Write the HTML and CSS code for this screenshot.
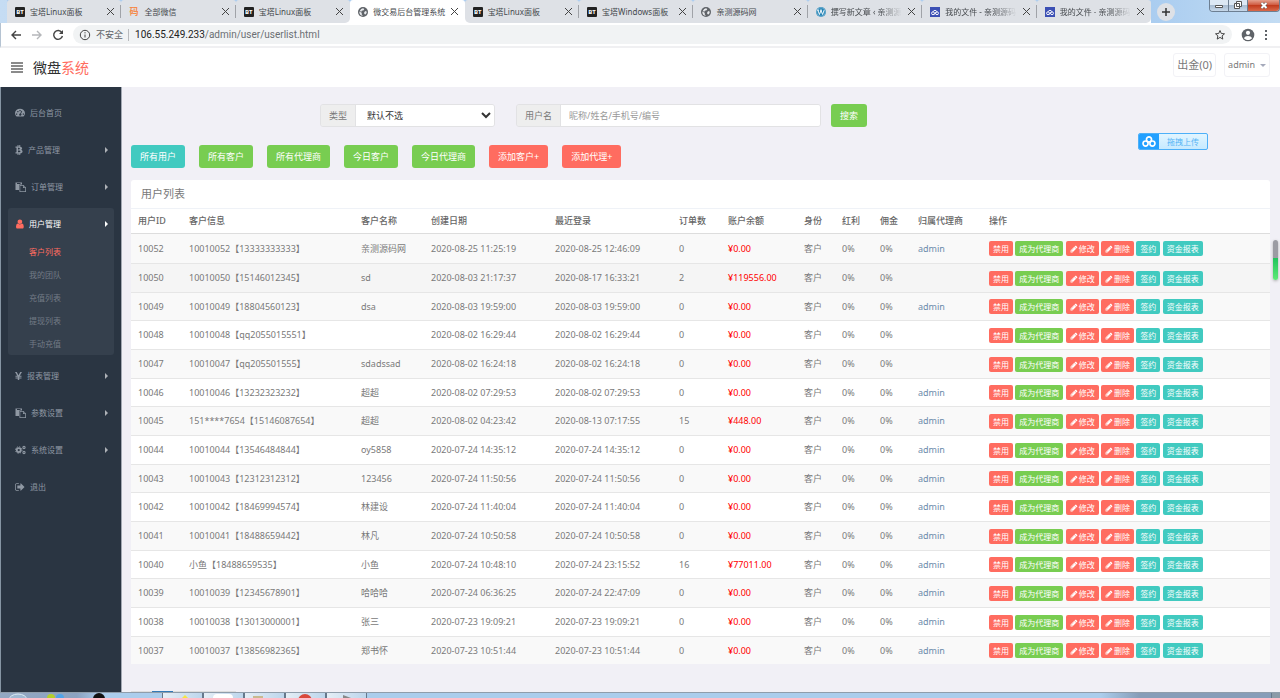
FILE: index.html
```html
<!DOCTYPE html>
<html lang="zh-CN">
<head>
	<meta charset="utf-8">
	<title>微交易后台管理系统</title>
	<meta name="viewport" content="width=device-width, initial-scale=1">
	<link rel="stylesheet" href="styles.css">
</head>
<body>

	<!-- icons -->
	<svg class="sprite" aria-hidden="true">
		<symbol id="i-globe" viewBox="0 0 16 16"><circle cx="8" cy="8" r="8" fill="#5f6368"/><path d="M2 7l4 2v3l2 2c-4 0-6-3-6-7zM5 3l3-1 2 1-1 2-3 1-1 2-2-2zM10 8l3-2 1 3-2 3-2-1z" fill="#e8eaed"/></symbol>
		<symbol id="i-wp" viewBox="0 0 16 16"><circle cx="8" cy="8" r="8" fill="#2283b5"/><circle cx="8" cy="8" r="6.8" fill="none" stroke="#dcebf4" stroke-width=".7"/><path d="M3 5l2.500 7L8 5.500l2.500 6.500L13 5M2 5h3M6.500 5h3" fill="none" stroke="#fff" stroke-width="1.500"/></symbol>
		<symbol id="i-disk" viewBox="0 0 16 16"><path d="M0 0h16v16H0z" fill="#3c50b4"/><g fill="none" stroke="#fff" stroke-width="1.500"><circle cx="4.800" cy="10" r="2.300"/><circle cx="11.200" cy="10" r="2.300"/><path d="M5 7.500a3.200 3.200 0 0 1 6 0M7 12l3-4"/></g></symbol>
		<symbol id="i-user" viewBox="128 64 1408 1664"><path d="M1536 1399q0 109-62.5 187t-150.5 78h-854q-88 0-150.5-78t-62.5-187q0-85 8.5-160.5t31.5-152 58.5-131 94-89 134.5-34.5q131 128 313 128t313-128q76 0 134.5 34.5t94 89 58.5 131 31.5 152 8.5 160.5zm-256-887q0 159-112.5 271.5t-271.5 112.5-271.5-112.5-112.5-271.5 112.5-271.5 271.5-112.500 271.500 112.500 112.500 271.500z"/></symbol>
		<symbol id="i-pencil" viewBox="0 0 1792 1792"><path d="M491 1536l91-91-235-235-91 91v107h128v128h107zm523-928q0-22-22-22-10 0-17 7l-542 542q-7 7-7 17 0 22 22 22 10 0 17-7l542-542q7-7 7-17zm-54-192l416 416-832 832h-416v-416zm683 96q0 53-37 90l-166 166-416-416 166-165q36-38 90-38 53 0 91 38l235 234q37 39 37 91z"/></symbol>
		<symbol id="i-out" viewBox="64 64 1664 1664"><path d="M704 1440q0 4 1 20t.5 26.500-3 23.500-10 19.500-20.500 6.500h-320q-119 0-203.500-84.500t-84.500-203.500v-704q0-119 84.500-203.500t203.500-84.500h320q13 0 22.500 9.500t9.500 22.500q0 4 1 20t.5 26.500-3 23.500-10 19.500-20.500 6.500h-320q-66 0-113 47t-47 113v704q0 66 47 113t113 47h312l11.500 1 11.500 3 8 5.500 7 9 2 13.500zm928-544q0 26-19 45l-544 544q-19 19-45 19t-45-19-19-45v-288h-448q-26 0-45-19t-19-45v-384q0-26 19-45t45-19h448v-288q0-26 19-45t45-19 45 19l544 544q19 19 19 45z"/></symbol>
		<symbol id="i-paste" viewBox="0 0 22 20"><path fill-rule="evenodd" d="M1 1h13v4h-4a2 2 0 0 0-2 2v9H1zM4 2v2h7V2z"/><path fill-rule="evenodd" d="M9 6h8l5 5v9H9zM10.500 7.500v11h10V12H16V7.500zM17.500 8v2.500H20z"/></symbol>
		<symbol id="i-cogs" viewBox="0 0 22 20"><circle cx="7.500" cy="10" r="4" fill="none" stroke="currentColor" stroke-width="3.500"/><circle cx="7.500" cy="10" r="6.500" fill="none" stroke="currentColor" stroke-width="2" stroke-dasharray="2.600 2.500"/><circle cx="18" cy="5" r="2.200" fill="none" stroke="currentColor" stroke-width="2.200"/><circle cx="18" cy="15" r="2.200" fill="none" stroke="currentColor" stroke-width="2.200"/></symbol>
		<symbol id="i-dash" viewBox="0 0 20 20"><path fill-rule="evenodd" d="M3 17a10 9 0 1 1 14 0zM2 11h2.500v2.500H2zM4.500 6H7v2.500H4.500zM8.800 4h2.500v2.500H8.800zM15.500 11H18v2.500h-2.500zM13 5.500L10.500 11a2.200 2.200 0 1 0 1.500.5l2.500-5z"/></symbol>
		<symbol id="i-btc" viewBox="0 0 16 20"><path fill-rule="evenodd" d="M1 3h4V0h2v3h1.500V0h2v3.300c5 1 4.500 5 2 6.200 4 1.500 3.500 7-2 7.500v3h-2v-3H7v3H5v-3H1v-2.500h2v-9H1zM6 5.500v3.300c5 .3 5-3.300 0-3.300zM6 11v3.500c6.500.3 6.500-3.800 0-3.500z"/></symbol>
		<symbol id="i-yen" viewBox="0 0 14 20"><path d="M0 2h3.500L7 8.500 10.500 2H14l-4.500 7.500H13v2H8.500v1.500H13v2H8.500V18h-3v-3H1v-2h4.500v-1.500H1v-2h3.500z"/></symbol>
		<symbol id="i-cloud" viewBox="0 0 20 16"><g fill="none" stroke="#fff" stroke-width="2.400"><circle cx="10" cy="5" r="3.700"/><circle cx="5" cy="11" r="3.700"/><circle cx="15" cy="11" r="3.700"/></g></symbol>
	</svg>

	<div class="window">
		<!-- browser tabs -->
		<div class="tab-strip">
			<div class="tab-list">
				<div class="tab"><span class="bt">BT</span><span class="tab-title">宝塔Linux面板</span><button class="tab-close" aria-label="关闭"></button></div>
				<div class="tab"><span class="ma">码</span><span class="tab-title">全部微信</span><button class="tab-close" aria-label="关闭"></button></div>
				<div class="tab before"><span class="bt">BT</span><span class="tab-title">宝塔Linux面板</span><button class="tab-close" aria-label="关闭"></button></div>
				<div class="tab active"><svg class="fav"><use href="#i-globe"/></svg><span class="tab-title">微交易后台管理系统</span><button class="tab-close" aria-label="关闭"></button></div>
				<div class="tab after"><span class="bt">BT</span><span class="tab-title">宝塔Linux面板</span><button class="tab-close" aria-label="关闭"></button></div>
				<div class="tab"><span class="bt">BT</span><span class="tab-title">宝塔Windows面板</span><button class="tab-close" aria-label="关闭"></button></div>
				<div class="tab"><svg class="fav"><use href="#i-globe"/></svg><span class="tab-title">亲测源码网</span><button class="tab-close" aria-label="关闭"></button></div>
				<div class="tab"><svg class="fav"><use href="#i-wp"/></svg><span class="tab-title fade">撰写新文章 ‹ 亲测源</span><button class="tab-close" aria-label="关闭"></button></div>
				<div class="tab"><svg class="fav"><use href="#i-disk"/></svg><span class="tab-title fade">我的文件 - 亲测源码</span><button class="tab-close" aria-label="关闭"></button></div>
				<div class="tab before"><svg class="fav"><use href="#i-disk"/></svg><span class="tab-title fade">我的文件 - 亲测源码</span><button class="tab-close" aria-label="关闭"></button></div>
			</div>
			<button class="new-tab" aria-label="新标签页"><svg viewBox="0 0 10 10"><path d="M5 1v8M1 5h8"/></svg></button>
			<div class="win-buttons">
				<button class="win-btn" aria-label="最小化"><svg viewBox="0 0 18 11"><path d="M5.500 5.500h7v2h-7z"/></svg></button>
				<button class="win-btn" aria-label="还原"><svg viewBox="0 0 18 11"><path d="M7.500 1.500h5v5h-5zM5.500 3.500h5v5h-5z"/></svg></button>
				<button class="win-btn win-close" aria-label="关闭窗口"><svg viewBox="0 0 18 11"><path d="M6.500 3l5 5M11.500 3l-5 5" stroke="#555" stroke-width="3"/><path d="M6.500 3l5 5M11.500 3l-5 5" stroke="#fff" stroke-width="2"/></svg></button>
			</div>
		</div>

		<!-- address bar -->
		<div class="toolbar">
			<svg class="nav-icon" viewBox="0 0 12 12"><path d="M11 6H2M6 2L2 6l4 4"/></svg>
			<svg class="nav-icon dim" viewBox="0 0 12 12"><path d="M1 6h9M6 2l4 4-4 4"/></svg>
			<svg class="nav-icon" viewBox="0 0 12 12"><path d="M9.800 3.500A4.400 4.400 0 1 0 10.400 7"/><path d="M11 1v4H7z" fill="#444" stroke="none"/></svg>
			<div class="address">
				<svg class="info" viewBox="0 0 12 12"><circle cx="6" cy="6" r="4.700"/><path d="M6 5.500v3M6 3.200v1.200"/></svg>
				<span class="unsafe">不安全</span>
				<span class="url"><b>106.55.249.233</b>/admin/user/userlist.html</span>
				<svg class="star" viewBox="0 0 12 12"><path d="M6 1.500l1.300 3 3.200.3-2.400 2.100.7 3.200L6 8.400l-2.800 1.700.7-3.200-2.400-2.100 3.200-.3z"/></svg>
			</div>
			<svg class="person" viewBox="0 0 14 14"><circle cx="7" cy="7" r="6.300" fill="#5f6368"/><circle cx="7" cy="4.800" r="2.100" fill="#fff"/><path d="M3 10.200c1-2.800 7-2.800 8 0-2 2.400-6 2.400-8 0z" fill="#fff"/></svg>
			<svg class="dots" viewBox="0 0 4 14"><path d="M1 2h2v2H1zM1 6h2v2H1zM1 10h2v2H1z" fill="#5f6368"/></svg>
		</div>

		<!-- site header -->
		<header class="header">
			<button class="bars" aria-label="菜单"><svg viewBox="0 0 12 11"><path d="M0 1h12M0 4h12M0 7h12M0 10h12"/></svg></button>
			<a class="logo" href="#">微盘<span>系统</span></a>
			<a class="top-link cash" href="#">出金(0)</a>
			<a class="top-link" href="#">admin<i class="caret"></i></a>
		</header>

		<div class="container">
			<aside class="sidebar">
				<ul class="menu">
					<li><a href="#"><svg width="10" height="10"><use href="#i-dash"/></svg>后台首页</a></li>
					<li><a class="has-sub" href="#"><svg width="8" height="10"><use href="#i-btc"/></svg>产品管理</a></li>
					<li><a class="has-sub" href="#"><svg width="11" height="10"><use href="#i-paste"/></svg>订单管理</a></li>
					<li class="open">
						<a class="has-sub" href="#"><svg width="9" height="10"><use href="#i-user"/></svg>用户管理</a>
						<ul class="sub">
							<li><a class="current" href="#">客户列表</a></li>
							<li><a href="#">我的团队</a></li>
							<li><a href="#">充值列表</a></li>
							<li><a href="#">提现列表</a></li>
							<li><a href="#">手动充值</a></li>
						</ul>
					</li>
					<li><a class="has-sub" href="#"><svg width="7" height="10"><use href="#i-yen"/></svg>报表管理</a></li>
					<li><a class="has-sub" href="#"><svg width="11" height="10"><use href="#i-paste"/></svg>参数设置</a></li>
					<li><a class="has-sub" href="#"><svg width="11" height="10"><use href="#i-cogs"/></svg>系统设置</a></li>
					<li><a href="#"><svg width="10" height="10"><use href="#i-out"/></svg>退出</a></li>
				</ul>
			</aside>

			<main class="main">
				<form class="search">
					<div class="group group-type">
						<label for="otype">类型</label>
						<select id="otype"><option>默认不选</option></select>
					</div>
					<div class="group group-name">
						<label for="username">用户名</label>
						<input id="username" type="text" placeholder="昵称/姓名/手机号/编号">
					</div>
					<button class="btn green" type="button">搜索</button>
				</form>

				<div class="filters">
					<button class="btn teal">所有用户</button>
					<button class="btn green">所有客户</button>
					<button class="btn green">所有代理商</button>
					<button class="btn green">今日客户</button>
					<button class="btn green">今日代理商</button>
					<button class="btn red">添加客户+</button>
					<button class="btn red">添加代理+</button>
				</div>

				<section class="panel">
					<h1>用户列表</h1>
					<table>
						<colgroup>
							<col class="c-id"><col class="c-info"><col class="c-name"><col class="c-date"><col class="c-date"><col class="c-num">
							<col class="c-money"><col class="c-small"><col class="c-small"><col class="c-small"><col class="c-agent"><col>
						</colgroup>
						<thead>
							<tr><th>用户ID</th><th>客户信息</th><th>客户名称</th><th>创建日期</th><th>最近登录</th><th>订单数</th><th>账户余额</th><th>身份</th><th>红利</th><th>佣金</th><th>归属代理商</th><th>操作</th></tr>
						</thead>
						<tbody id="users"></tbody>
					</table>
				</section>

				<div class="pages"><span></span><span class="on"></span><span></span><span></span><span></span></div>

				<button class="upload"><span class="upload-icon"><svg><use href="#i-cloud"/></svg></span><span class="upload-text">拖拽上传</span></button>
				<div class="meter"></div>
			</main>
		</div>

		<!-- taskbar -->
		<footer class="taskbar">
			<svg width="162" height="5"><ellipse cx="18" cy="7" rx="9" ry="6" fill="#9fb9d2" stroke="#dcecf5"/><circle cx="51" cy="5" r="4" fill="#b4cf2a"/><circle cx="60" cy="5" r="4" fill="#4fa3e8"/><circle cx="99" cy="6" r="6" fill="#111"/></svg>
			<div class="task"><svg width="39" height="5"><path d="M19 5l3-3 3 3z" fill="#f5e642"/></svg></div>
			<div class="task"><svg width="39" height="5"><rect x="9" y="1" width="20" height="8" rx="4" fill="#fff"/></svg></div>
			<div class="task"><svg width="39" height="5"><path d="M8 3h10v2H8z" fill="#c9b98f"/></svg></div>
			<div class="task"><svg width="39" height="5"><circle cx="19" cy="8" r="7" fill="#d9483b"/></svg></div>
			<div class="task"><svg width="39" height="5"><path d="M16 2l8 3h-8z" fill="#888"/></svg></div>
			<div class="show-desktop"></div>
		</footer>
	</div>

	<script src="script.js"></script>
</body>
</html>
```
FILE: styles.css
```css
* {
	box-sizing: border-box;
}
body {
	margin: 0;
	font-family: "Noto Sans", "Noto Sans CJK SC", sans-serif;
	font-size: 9px;
	line-height: 14px;
	color: #797979;
	background: #f1f0f6;
}
a {
	color: inherit;
	text-decoration: none;
}
ul {
	list-style: none;
	margin: 0;
	padding: 0;
}
button, input, select {
	font: inherit;
	border: 0;
	padding: 0;
}
.sprite {
	display: none;
}
.window {
	display: flex;
	flex-direction: column;
	height: 100vh;
	overflow: hidden;
}

/* browser tabs */
.tab-strip {
	display: flex;
	align-items: center;
	height: 23px;
	flex: none;
	padding-left: 7px;
	background: linear-gradient(90deg, #c5dcf3, #aacbea 30%, #aacdf0 90%, #c3dcf3);
}
.tab-list {
	display: flex;
	flex: 1;
	height: 23px;
	background: linear-gradient(#aacdf0 4px, #fff 4px);
}
.tab {
	position: relative;
	display: flex;
	flex: 1;
	min-width: 0;
	align-items: center;
	gap: 5px;
	padding: 0 6px 0 8px;
	border-radius: 3px 3px 0 0;
	background: #dee1e6;
	color: #45494d;
	font-size: 8px;
}
.tab::after {
	content: "";
	position: absolute;
	right: 0;
	top: 5px;
	height: 13px;
	border-right: 1px solid #a0a3a8;
}
.tab.active {
	background: #fff;
}
.tab.before {
	border-bottom-right-radius: 5px;
}
.tab.after {
	border-bottom-left-radius: 5px;
}
.tab.active::after, .tab.before::after {
	display: none;
}
.fav, .bt, .ma {
	flex: none;
	width: 10px;
	height: 10px;
}
.bt {
	background: #222;
	color: #fff;
	font-size: 6px;
	font-weight: bold;
	line-height: 10px;
	text-align: center;
	border-radius: 1px;
}
.ma {
	color: #f58a4b;
	font-size: 9px;
	font-weight: bold;
	line-height: 10px;
}
.tab-title {
	flex: 1;
	white-space: nowrap;
}
.fade {
	mask-image: linear-gradient(90deg, #000 70%, transparent);
}
.tab-close {
	flex: none;
	width: 9px;
	height: 9px;
	background:
		linear-gradient(45deg, transparent 45%, #444 45%, #444 57%, transparent 57%) center / 7px 7px no-repeat,
		linear-gradient(135deg, transparent 45%, #444 45%, #444 57%, transparent 57%) center / 7px 7px no-repeat;
}
.new-tab {
	display: flex;
	align-items: center;
	justify-content: center;
	width: 18px;
	height: 18px;
	margin: 0 34px 0 6px;
	border-radius: 50%;
	background: #dee1e6;
}
.new-tab svg {
	width: 10px;
	fill: none;
	stroke: #333;
	stroke-width: 1.5;
}
.win-buttons {
	display: flex;
	align-self: flex-start;
	height: 12px;
	border: 1px solid #6d7f92;
	border-top: 0;
	border-radius: 0 0 4px 4px;
	overflow: hidden;
}
.win-btn {
	display: flex;
	justify-content: center;
	width: 19px;
	border-right: 1px solid #6d7f92;
	background: linear-gradient(#dce8f4 50%, #a9bdd2 50%, #c6d8ea);
}
.win-btn svg {
	width: 18px;
	height: 11px;
	fill: #fff;
	stroke: #555;
}
.win-close {
	width: 31px;
	border-right: 0;
	background: linear-gradient(#e5a28f, #cf5a40 45%, #c23c1e 50%, #d9694a);
}

/* address bar */
.toolbar {
	display: flex;
	flex: none;
	align-items: center;
	gap: 9px;
	height: 25px;
	padding: 0 12px 0 9px;
	background: #fff;
	border-bottom: 2px solid #f0f0f2;
	border-left: 1px solid #b5c3d2;
}
.toolbar svg {
	flex: none;
	fill: none;
	stroke: #444;
}
.nav-icon {
	width: 12px;
	stroke-width: 1.4;
}
.toolbar .dim {
	stroke: #b5b7ba;
}
.address {
	display: flex;
	flex: 1;
	align-items: center;
	height: 19px;
	padding: 0 6px;
	border-radius: 10px;
	background: #f1f3f4;
}
.info, .star {
	width: 12px;
}
.unsafe {
	margin: 0 6px 0 5px;
	padding-right: 5px;
	border-right: 1px solid #b9bbbe;
	line-height: 12px;
	color: #5f6368;
}
.url {
	flex: 1;
	font-family: Roboto, "Noto Sans", sans-serif;
	font-size: 10px;
	color: #6b6f73;
}
.url b {
	font-weight: normal;
	color: #222;
}
.person {
	width: 14px;
}
.toolbar .person, .toolbar .dots {
	stroke: none;
}
.dots {
	width: 4px;
}

/* site header */
.header {
	display: flex;
	flex: none;
	align-items: center;
	height: 39px;
	padding: 0 10px 0 11px;
	background: #fff;
}
.bars {
	width: 12px;
	height: 11px;
	background: none;
}
.bars svg {
	display: block;
	width: 12px;
	height: 11px;
	stroke: #666;
	stroke-width: 1.6;
}
.logo {
	flex: 1;
	margin-left: 10px;
	font-size: 14px;
	color: #2e2e2e;
}
.logo span {
	color: #ff6c60;
}
.top-link {
	display: flex;
	align-items: center;
	align-self: flex-start;
	height: 24px;
	margin: 5px 0 0 8px;
	padding: 0 3px;
	border: 1px solid #f2f2f6;
	border-radius: 3px;
}
.cash {
	font-size: 11px;
}
.caret {
	margin-left: 5px;
	border: 3px solid transparent;
	border-top-color: #a5aabb;
	border-bottom: 0;
}

/* left menu */
.container {
	display: flex;
	flex: 1;
	min-height: 0;
}
.sidebar {
	flex: none;
	width: 122px;
	padding: 10px 7px;
	background: #2a3542;
	border-left: 1px solid #8695a3;
	border-right: 1px solid #a3a9b3;
}
.menu {
	display: flex;
	flex-direction: column;
	gap: 5px;
	font-size: 8px;
	color: #8f98a3;
}
.menu svg {
	fill: currentColor;
}
.menu > li > a {
	display: flex;
	align-items: center;
	gap: 5px;
	height: 32px;
	padding: 0 6px 0 7px;
}
.has-sub::after {
	content: "";
	margin-left: auto;
	border: 3px solid transparent;
	border-left-color: #aeb2b7;
	border-right: 0;
}
.open {
	background: #35404d;
	border-radius: 3px;
}
.menu .open > a {
	color: #fff;
}
.open > a svg {
	color: #ff6c60;
}
.open > .has-sub::after {
	border-left-color: #fff;
}
.sub a {
	display: block;
	padding-left: 21px;
	line-height: 23px;
	color: #737b86;
}
.sub .current {
	color: #ff6c60;
}

/* content */
.main {
	position: relative;
	flex: 1;
	min-width: 0;
	padding: 17px 10px 0 9px;
	overflow: hidden;
}
.search {
	display: flex;
	margin-bottom: 18px;
	padding-left: 16.6%;
}
.group {
	display: flex;
	height: 23px;
	margin-right: 21px;
	border: 1px solid #e2e2e4;
	border-radius: 3px;
	overflow: hidden;
}
.group-type {
	width: 175px;
}
.group-name {
	width: 305px;
	margin-right: 10px;
}
.group label {
	flex: none;
	padding: 0 8px;
	line-height: 21px;
	background: #eee;
	border-right: 1px solid #e2e2e4;
}
.group select, .group input {
	flex: 1;
	min-width: 0;
	background: #fff;
	color: #333;
}
.group select {
	padding-left: 7px;
}
.group input {
	padding-left: 8px;
}
.group input::placeholder {
	color: #999;
}
.btn {
	height: 23px;
	padding: 0 9px;
	border-radius: 3px;
	color: #fff;
}
.green {
	background: #78cd51;
}
.teal {
	background: #41cac0;
}
.red {
	background: #ff6c60;
}
.filters {
	display: flex;
	gap: 14px;
	margin-bottom: 12px;
}
.panel {
	background: #fff;
	border-radius: 3px 3px 0 0;
}
.panel h1 {
	margin: 0;
	padding: 0 10px;
	font-size: 11px;
	font-weight: normal;
	line-height: 28px;
	border-bottom: 1px solid #eff2f7;
}
table {
	width: 100%;
	table-layout: fixed;
	border-collapse: separate;
	border-spacing: 0;
}
.c-id { width: 51px; }
.c-info { width: 172px; }
.c-name { width: 70px; }
.c-date { width: 124px; }
.c-num { width: 49px; }
.c-money { width: 76px; }
.c-small { width: 38px; }
.c-agent { width: 71px; }
th, td {
	height: 29px;
	padding: 0 0 0 7px;
	text-align: left;
	white-space: nowrap;
}
th {
	height: 25px;
	font-weight: 500;
	color: #666;
	border-bottom: 1px solid #ddd;
}
td {
	border-top: 1px solid #e6e6e6;
}
tr:first-child td {
	border-top: 0;
}
/* rows alternate 29/29/28 */
tr:nth-child(3n) td {
	height: 28px;
}
tr:nth-child(odd) td {
	background: #f9f9f9;
}
tbody tr:nth-child(2) td {
	background: #f5f5f5;
}
.money {
	color: #f00;
}
.agent a {
	color: #6b8bab;
}
.mini {
	height: 15px;
	padding: 0 4px;
	border-radius: 2px;
	font-size: 8px;
	line-height: 15px;
	color: #fff;
}
.mini svg {
	width: 8px;
	height: 8px;
	margin-right: 1px;
	fill: #fff;
	vertical-align: -1px;
}
.pages {
	display: flex;
	margin-top: 27px;
}
.pages span {
	width: 21px;
	height: 22px;
	background: #fff;
	border: 1px solid #ddd;
}
.pages .on {
	background: #337ab7;
	border-color: #337ab7;
}

/* floating widgets */
.upload {
	position: absolute;
	top: 46px;
	right: 72px;
	display: flex;
	width: 70px;
	height: 17px;
	border: 1px solid #4db0f8;
	border-radius: 2px;
	background: linear-gradient(#e2f5ff, #c6eaff);
	overflow: hidden;
}
.upload-icon {
	width: 20px;
	height: 100%;
	background: #22a0ff;
}
.upload-icon svg {
	width: 14px;
	height: 11px;
	margin: 2px 0;
}
.upload-text {
	flex: 1;
	font-size: 8px;
	line-height: 15px;
	color: #55b4f5;
}
.meter {
	position: absolute;
	top: 153px;
	right: 2px;
	width: 5px;
	height: 40px;
	border-radius: 3px;
	background: linear-gradient(#9b9ba3 45%, #1fc35c 45%, #5fea78);
	box-shadow: 0 1px 3px #aaa;
}

/* taskbar */
.taskbar {
	display: flex;
	flex: none;
	height: 6px;
	border-top: 1px solid #8f9dab;
	background: linear-gradient(90deg, #93a8c2, #8ba2c0 6%, #abcdec 8%, #abcdec 86%, #879db8 89%);
	overflow: hidden;
}
.taskbar svg {
	display: block;
	flex: none;
}
.task {
	flex: none;
	width: 41px;
	border: 1px solid #66788b;
	border-width: 0 1px;
	background: linear-gradient(90deg, #e5eef6, #bdd6ec);
}
.show-desktop {
	width: 9px;
	margin-left: auto;
	border-left: 1px solid #66788b;
	background: #8b9aa8;
}
```
FILE: script.js
```js
// id, info, name, created, last login, orders, balance, agent
let users = [
	["10052", "10010052【13333333333】", "亲测源码网", "2020-08-25 11:25:19", "2020-08-25 12:46:09", "0", "0.00", "admin"],
	["10050", "10010050【15146012345】", "sd", "2020-08-03 21:17:37", "2020-08-17 16:33:21", "2", "119556.00", ""],
	["10049", "10010049【18804560123】", "dsa", "2020-08-03 19:59:00", "2020-08-03 19:59:00", "0", "0.00", "admin"],
	["10048", "10010048【qq2055015551】", "", "2020-08-02 16:29:44", "2020-08-02 16:29:44", "0", "0.00", ""],
	["10047", "10010047【qq205501555】", "sdadssad", "2020-08-02 16:24:18", "2020-08-02 16:24:18", "0", "0.00", ""],
	["10046", "10010046【13232323232】", "超超", "2020-08-02 07:29:53", "2020-08-02 07:29:53", "0", "0.00", "admin"],
	["10045", "151****7654【15146087654】", "超超", "2020-08-02 04:23:42", "2020-08-13 07:17:55", "15", "448.00", "admin"],
	["10044", "10010044【13546484844】", "oy5858", "2020-07-24 14:35:12", "2020-07-24 14:35:12", "0", "0.00", "admin"],
	["10043", "10010043【12312312312】", "123456", "2020-07-24 11:50:56", "2020-07-24 11:50:56", "0", "0.00", "admin"],
	["10042", "10010042【18469994574】", "林建设", "2020-07-24 11:40:04", "2020-07-24 11:40:04", "0", "0.00", "admin"],
	["10041", "10010041【18488659442】", "林凡", "2020-07-24 10:50:58", "2020-07-24 10:50:58", "0", "0.00", "admin"],
	["10040", "小鱼【18488659535】", "小鱼", "2020-07-24 10:48:10", "2020-07-24 23:15:52", "16", "77011.00", "admin"],
	["10039", "10010039【12345678901】", "哈哈哈", "2020-07-24 06:36:25", "2020-07-24 22:47:09", "0", "0.00", "admin"],
	["10038", "10010038【13013000001】", "张三", "2020-07-23 19:09:21", "2020-07-23 19:09:21", "0", "0.00", "admin"],
	["10037", "10010037【13856982365】", "郑书怀", "2020-07-23 10:51:44", "2020-07-23 10:51:44", "0", "0.00", "admin"]
];

let pencil = '<svg><use href="#i-pencil"/></svg>';
let actions = `<button class="mini red">禁用</button>
	<button class="mini green">成为代理商</button>
	<button class="mini red">${pencil}修改</button>
	<button class="mini red">${pencil}删除</button>
	<button class="mini teal">签约</button>
	<button class="mini teal">资金报表</button>`;

let html = "";
for (let u of users) {
	html += `<tr>
		<td>${u[0]}</td><td>${u[1]}</td><td>${u[2]}</td><td>${u[3]}</td><td>${u[4]}</td><td>${u[5]}</td>
		<td class="money">¥${u[6]}</td><td>客户</td><td>0%</td><td>0%</td>
		<td class="agent"><a href="#">${u[7]}</a></td>
		<td>${actions}</td>
	</tr>`;
}
document.getElementById("users").innerHTML = html;
```
